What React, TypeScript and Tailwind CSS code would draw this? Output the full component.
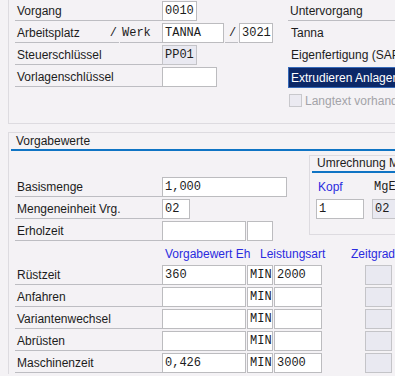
const label =
  "h-[21px] border-b border-[#bdbdc2] pl-[2px] pt-[2px] leading-[19px] whitespace-nowrap";
const field =
  "h-[20px] border border-[#bcbcbf] bg-white pl-[2px] pt-[1px] leading-[17px] whitespace-nowrap font-['Liberation_Mono',monospace]";
const grey =
  "h-[20px] border border-[#c4c4c8] bg-[#e9e9f1] pl-[2px] pt-[1px] leading-[17px] whitespace-nowrap font-['Liberation_Mono',monospace]";
const head = "h-[22px] pt-[1px] leading-[22px] whitespace-nowrap text-[#2b2bdf]";

const Row = ({ children }: { children: React.ReactNode }) => (
  <div className="flex h-[22px] items-start">{children}</div>
);

const timeRows = [
  { name: "Rüstzeit", value: "360", art: "2000" },
  { name: "Anfahren", value: "", art: "" },
  { name: "Variantenwechsel", value: "", art: "" },
  { name: "Abrüsten", value: "", art: "" },
  { name: "Maschinenzeit", value: "0,426", art: "3000" },
];

export default function App() {
  return (
    <div className="w-[395px] h-[376px] overflow-hidden bg-[#f4f2f5] text-[#1c1c1c] text-[12px] font-['Liberation_Sans',Arial,sans-serif]">
      {/* Vorgang / Untervorgang */}
      <div className="ml-[8px] h-[124px] border-l border-b border-[#dddbe0] flex">
        <div className="w-[279px] shrink-0 pl-[6px]">
          <Row>
            <div className={`${label} w-[147px]`}>Vorgang</div>
            <div className={`${field} mt-[1px] w-[35px]`}>0010</div>
          </Row>
          <Row>
            <div className={`${label} w-[104px] flex justify-between pr-[2px]`}>
              <span>Arbeitsplatz</span>
              <span className="font-['Liberation_Mono',monospace]">/</span>
            </div>
            <div className={`${label} ml-[1px] w-[42px] font-['Liberation_Mono',monospace]`}>Werk</div>
            <div className={`${field} mt-[1px] w-[62px]`}>TANNA</div>
            <div className={`${label} ml-[1px] w-[13px] pl-0 text-center font-['Liberation_Mono',monospace]`}>/</div>
            <div className={`${field} mt-[1px] ml-[1px] w-[34px]`}>3021</div>
          </Row>
          <Row>
            <div className={`${label} w-[147px]`}>Steuerschlüssel</div>
            <div className={`${grey} mt-[1px] w-[35px]`}>PP01</div>
          </Row>
          <Row>
            <div className={`${label} w-[147px]`}>Vorlagenschlüssel</div>
            <div className={`${field} mt-[1px] w-[55px]`}></div>
          </Row>
        </div>
        <div className="w-[140px] shrink-0">
          <Row>
            <div className={`${label} w-[140px] pl-[2px]`}>Untervorgang</div>
          </Row>
          <div className="h-[22px] pl-[3px] pt-[2px] leading-[19px] whitespace-nowrap">Tanna</div>
          <div className="h-[22px] pl-[3px] pt-[2px] leading-[19px] whitespace-nowrap">
            Eigenfertigung (SAP-Standard)
          </div>
          <div className="mt-[1px] h-[21px] border border-[#3569b8] bg-[#0c2868] pl-[2px] pt-[1px] leading-[18px] text-white whitespace-nowrap">
            Extrudieren Anlagen
          </div>
          <div className="mt-[6px] ml-[1px] flex items-start">
            <div className="w-[13px] h-[13px] border border-[#c8c8cc] bg-[#ebeaf1]"></div>
            <span className="ml-[3px] leading-[13px] pt-[1px] text-[#a3a3a8] whitespace-nowrap">
              Langtext vorhanden
            </span>
          </div>
        </div>
      </div>

      {/* Vorgabewerte */}
      <div className="mt-[8px] ml-[8px] border-l border-t border-[#dddbe0]">
        <div className="ml-[2px] h-[18px] border-b-2 border-[#0f74c4] pl-[5px] leading-[16px]">
          Vorgabewerte
        </div>

        <div className="flex items-start">
          <div className="w-[278px] shrink-0 pl-[6px] pt-[25px]">
            <Row>
              <div className={`${label} w-[147px]`}>Basismenge</div>
              <div className={`${field} mt-[1px] w-[125px]`}>1,000</div>
            </Row>
            <Row>
              <div className={`${label} w-[147px]`}>Mengeneinheit Vrg.</div>
              <div className={`${field} mt-[1px] w-[28px]`}>02</div>
            </Row>
            <Row>
              <div className={`${label} w-[147px]`}>Erholzeit</div>
              <div className={`${field} mt-[1px] w-[84px]`}></div>
              <div className={`${field} mt-[1px] ml-[1px] w-[26px]`}></div>
            </Row>
          </div>

          {/* Umrechnung */}
          <div className="ml-[22px] mt-[4px] w-[110px] h-[80px] shrink-0 border border-[#dddbe0]">
            <div className="ml-[2px] h-[17px] border-b-2 border-[#0f74c4] pl-[5px] leading-[15px] whitespace-nowrap">
              Umrechnung MgE
            </div>
            <div className="flex pl-[6px]">
              <div className="w-[48px]">
                <div className="h-[26px] pt-[8px] pl-[2px] leading-[12px] text-[#2b2bdf]">Kopf</div>
                <div className={`${field} w-[48px]`}>1</div>
              </div>
              <div className="ml-[8px]">
                <div className="h-[26px] pt-[8px] pl-[2px] leading-[12px] font-['Liberation_Mono',monospace]">MgE</div>
                <div className={`${grey} w-[40px]`}>02</div>
              </div>
            </div>
          </div>
        </div>

        <div className="flex h-[22px] pl-[153px]">
          <div className={`${head} w-[84px] pl-[3px]`}>Vorgabewert</div>
          <div className={`${head} ml-[1px] w-[26px] pl-[1px]`}>Eh</div>
          <div className={`${head} ml-[1px] w-[48px] pl-[2px]`}>Leistungsart</div>
          <div className={`${head} ml-[43px] pl-[2px]`}>Zeitgrad</div>
        </div>

        <div className="pl-[6px]">
          {timeRows.map((r) => (
            <Row key={r.name}>
              <div className={`${label} w-[147px]`}>{r.name}</div>
              <div className={`${field} mt-[1px] w-[84px]`}>{r.value}</div>
              <div className={`${field} mt-[1px] ml-[1px] w-[26px] pl-[1px]`}>MIN</div>
              <div className={`${field} mt-[1px] ml-[1px] w-[48px]`}>{r.art}</div>
              <div className={`${grey} mt-[1px] ml-[43px] w-[27px]`}></div>
            </Row>
          ))}
        </div>
      </div>
    </div>
  );
}
